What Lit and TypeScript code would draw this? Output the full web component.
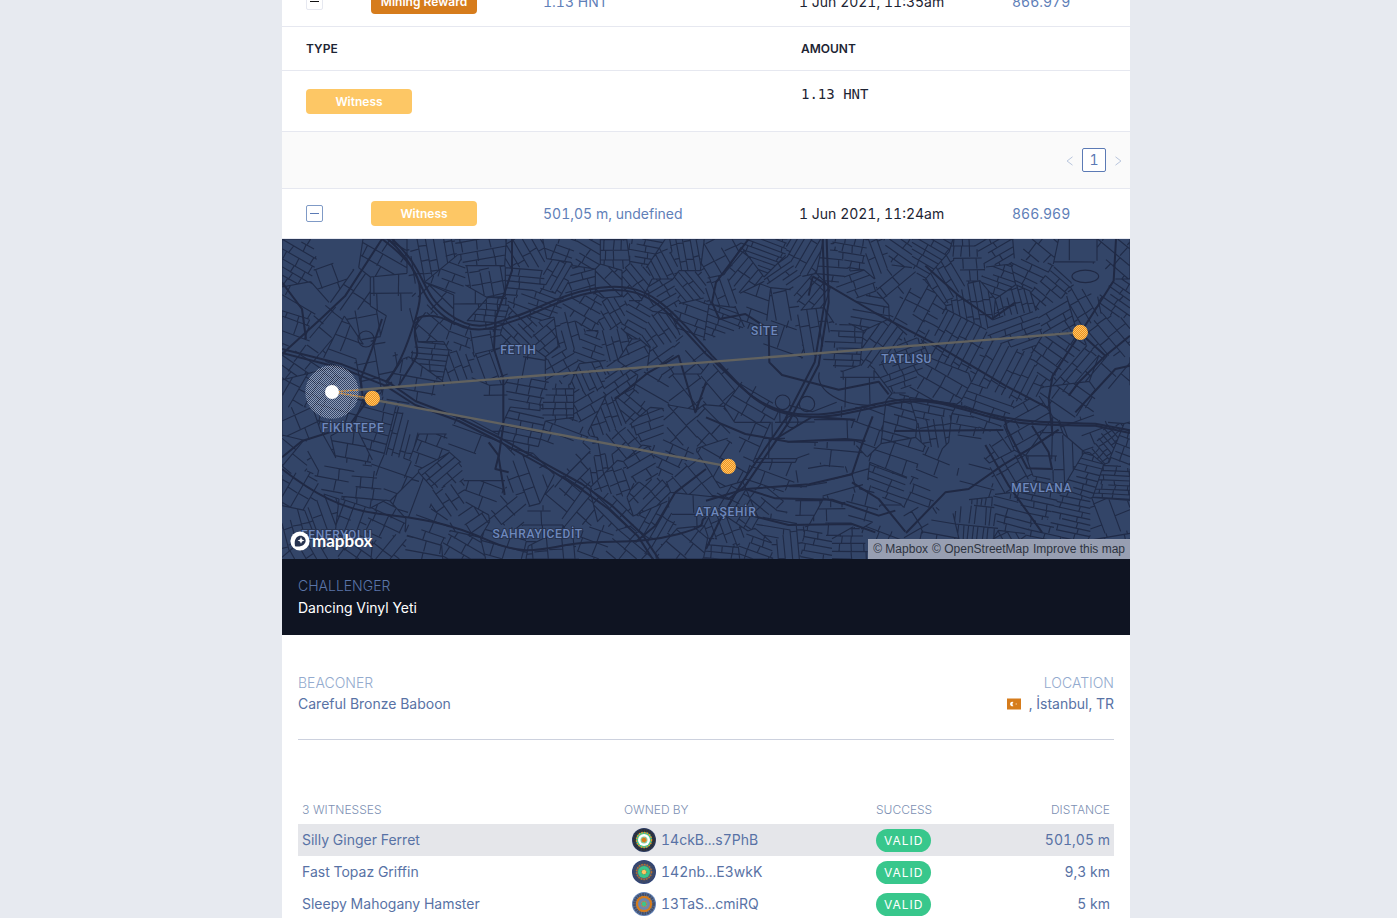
import { LitElement, html, css, svg } from "lit";
import { customElement } from "lit/decorators.js";

type Pt = [number, number];

/* Street blocks: centre x, centre y, direction in degrees, row gap, cross gap (0 = open land). */
const BLOCKS: number[][] = [
  [40, 80, 30, 24, 40], [170, 40, 0, 0, 0], [60, 190, 30, 70, 90], [150, 110, -20, 60, 50], [220, 160, -55, 42, 80],
  [130, 270, -50, 50, 60], [35, 270, 20, 40, 40], [190, 300, 20, 42, 60], [40, 370, 35, 30, 40], [300, 60, 30, 40, 60],
  [310, 160, 0, 80, 70], [250, 260, 80, 60, 70], [350, 290, 0, 0, 0], [290, 350, 80, 60, 50], [60, 450, -60, 36, 40],
  [450, 60, 80, 26, 40], [500, 120, 20, 24, 50], [600, 40, -10, 30, 45], [600, 120, 80, 32, 42], [560, 190, 0, 80, 90],
  [470, 190, 45, 50, 60], [740, 50, 60, 24, 60], [740, 120, 5, 20, 70], [760, 190, 20, 18, 60], [830, 100, -60, 20, 46],
  [840, 30, 20, 26, 44], [910, 50, 30, 24, 60], [900, 120, -15, 22, 50], [1000, 50, 0, 30, 26], [980, 120, 45, 34, 60],
  [1080, 40, 10, 20, 50], [1060, 120, 50, 20, 50], [1140, 80, 62, 18, 70], [1140, 160, -30, 20, 50], [1220, 50, 80, 20, 50],
  [1220, 140, 50, 18, 60], [1240, 230, 20, 26, 50], [610, 235, 5, 20, 30], [450, 265, 40, 50, 50], [540, 300, 20, 26, 50],
  [450, 350, 5, 17, 60], [400, 420, 10, 40, 50], [540, 370, 70, 22, 50], [590, 300, 80, 60, 60], [610, 380, 70, 40, 70],
  [720, 270, 45, 19, 60], [790, 300, -40, 24, 44], [740, 370, 10, 70, 80], [860, 290, 75, 22, 50], [920, 220, 30, 30, 40],
  [840, 370, -30, 24, 50], [920, 330, 20, 20, 50], [990, 230, 60, 20, 46], [1000, 310, 75, 22, 60], [1060, 250, 30, 19, 55],
  [1120, 280, 55, 20, 50], [1060, 350, -25, 26, 46], [1140, 360, -35, 28, 60], [930, 410, 65, 20, 56], [1010, 420, -35, 24, 44],
  [1210, 360, 50, 70, 90], [1210, 450, 52, 56, 60], [1110, 450, 30, 50, 60], [570, 470, 0, 0, 0], [620, 500, 0, 100, 120],
  [740, 470, 10, 24, 40], [730, 550, 12, 22, 44], [830, 500, 0, 22, 38], [840, 580, 20, 30, 42], [920, 500, -30, 28, 50],
  [850, 640, 0, 0, 0], [980, 530, 70, 22, 50], [1050, 500, 40, 26, 44], [1100, 560, -20, 26, 50], [1190, 560, 48, 50, 66],
  [1020, 610, 50, 26, 42], [950, 670, 80, 18, 44], [1000, 720, 70, 26, 36], [1080, 680, -30, 28, 40], [1160, 660, 25, 28, 46],
  [900, 670, -45, 34, 40], [1100, 770, -45, 22, 50], [1220, 720, 50, 50, 70], [1130, 840, -60, 20, 36], [1210, 810, 0, 80, 90],
  [1220, 920, 40, 44, 60], [60, 560, -25, 44, 60], [150, 530, 15, 50, 70], [200, 620, 10, 44, 60], [280, 580, 15, 30, 60],
  [360, 600, 105, 19, 56], [440, 630, 20, 34, 54], [440, 540, 0, 0, 0], [560, 610, 20, 60, 90], [480, 700, -40, 22, 50],
  [600, 680, 0, 0, 0], [40, 640, -50, 60, 60], [110, 640, 60, 60, 80], [160, 710, 10, 34, 60], [240, 750, 5, 36, 46],
  [340, 710, 20, 54, 90], [400, 770, -70, 50, 90], [60, 760, -60, 34, 60], [120, 830, 70, 28, 60], [210, 840, -70, 36, 60],
  [300, 860, 25, 36, 50], [40, 860, 75, 26, 60], [100, 930, 60, 30, 50], [220, 920, 35, 30, 44], [320, 930, -50, 34, 46],
  [440, 870, 20, 36, 60], [500, 780, 55, 28, 50], [600, 770, 20, 44, 60], [560, 840, -35, 34, 46], [420, 940, 10, 36, 60],
  [540, 930, 30, 30, 50], [660, 900, 15, 36, 44], [680, 820, -40, 40, 50], [750, 740, 70, 36, 50], [780, 850, 0, 44, 60],
  [830, 780, 40, 40, 50], [900, 830, -50, 40, 60], [820, 930, 85, 40, 60], [940, 900, 20, 40, 50], [1020, 940, 40, 36, 60],
  [980, 810, 45, 30, 40],
  [1300, 60, 60, 36, 60], [1320, 160, 70, 24, 50], [1380, 110, -50, 22, 60], [1460, 50, 20, 14, 90], [1510, 100, -35, 18, 60],
  [1420, 190, 20, 40, 60], [1500, 200, 80, 40, 50], [1560, 60, -60, 20, 60], [1580, 160, -50, 22, 70], [1310, 240, 20, 18, 60],
  [1340, 330, 0, 0, 0], [1420, 370, 0, 0, 0], [1500, 290, 20, 70, 80], [1590, 260, 80, 28, 60], [1660, 80, 5, 22, 60],
  [1710, 50, 10, 22, 30], [1720, 140, -20, 24, 60], [1690, 195, 0, 0, 0], [1690, 310, 2, 17, 54], [1740, 210, 10, 22, 50],
  [1790, 60, 70, 20, 60], [1840, 120, -40, 34, 60], [1850, 40, 35, 22, 60], [1930, 40, 30, 18, 60],
  [1900, 200, -62, 42, 30], [2020, 300, -62, 24, 62], [2170, 390, -62, 24, 62],
  [2060, 80, 0, 32, 22], [2080, 180, 80, 18, 60], [2010, 110, 60, 22, 50], [2140, 40, -30, 20, 60],
  [2150, 120, 20, 20, 60], [2200, 190, 75, 20, 50], [2240, 100, 25, 24, 60], [2250, 30, 40, 40, 60], [2300, 160, 40, 22, 40],
  [2330, 220, -30, 24, 50], [2210, 260, -20, 20, 50], [2390, 60, 0, 80, 70], [2440, 120, 0, 0, 0], [2400, 200, 60, 26, 44],
  [2500, 60, 40, 34, 60], [2500, 180, 35, 20, 50], [2480, 280, 50, 34, 50], [1790, 320, -55, 24, 60], [1850, 375, -20, 18, 40],
  [1960, 450, 30, 40, 50], [2340, 340, 35, 26, 50], [2390, 390, -50, 22, 60],
  [2470, 420, -50, 60, 90], [2400, 470, 35, 40, 90], [2480, 480, 0, 0, 0], [1480, 410, 0, 0, 0], [1600, 440, 0, 0, 0],
  [1740, 460, 0, 90, 90], [1310, 440, 50, 46, 70], [1390, 500, 30, 40, 60], [1300, 560, 45, 40, 60], [1390, 600, 25, 54, 60],
  [1330, 650, 30, 60, 80], [1650, 570, 0, 60, 145], [1560, 590, 0, 60, 90], [1480, 640, 0, 60, 110], [1640, 650, 5, 52, 120],
  [1600, 700, -10, 50, 90], [1480, 700, 20, 56, 70], [1760, 540, 20, 50, 70], [1850, 550, 15, 24, 60], [1950, 520, 12, 22, 56],
  [1960, 560, 80, 24, 40], [2050, 570, 10, 26, 44], [2110, 530, 20, 24, 50], [1870, 655, 18, 46, 48],
  [1950, 690, 22, 46, 50], [1830, 755, 20, 20, 56], [1900, 770, 20, 24, 56], [2050, 650, 0, 0, 0], [2070, 700, 15, 50, 100],
  [2150, 620, 55, 40, 60], [2220, 590, -30, 32, 60], [2180, 680, 60, 40, 60], [2290, 640, 0, 80, 90], [2360, 660, 88, 30, 90],
  [2420, 590, -20, 40, 60], [2470, 620, 50, 16, 18], [2410, 690, 15, 18, 50], [2520, 640, 20, 24, 30], [2500, 720, 3, 14, 40],
  [2090, 860, 6, 54, 15], [1960, 890, 10, 44, 50], [2200, 840, 15, 24, 70],
  [2260, 790, 12, 20, 46], [2360, 840, 12, 18, 54], [2490, 840, 70, 50, 60],
  [2500, 920, -10, 16, 70], [2280, 900, 12, 20, 50], [2190, 920, 60, 24, 40], [1990, 740, 0, 0, 0], [1900, 840, -30, 60, 60],
  [1740, 800, 15, 44, 50], [1650, 840, 0, 38, 46], [1560, 790, 0, 44, 60], [1450, 790, 40, 30, 40], [1380, 820, -60, 24, 36],
  [1480, 860, 10, 26, 44], [1340, 880, 70, 26, 40], [1320, 940, 5, 20, 34], [1420, 930, 20, 20, 36], [1520, 920, 85, 22, 40],
  [1600, 930, 10, 22, 34], [1700, 930, 0, 24, 36], [1680, 740, -15, 40, 90], [1800, 900, 20, 36, 44], [1830, 840, 0, 0, 0],
];

const MAJOR: string[] = [
  "M300 0C420 90 430 140 400 240S340 400 310 430M318 0C430 100 400 170 490 235S640 262 700 244 860 162 980 154 1140 200 1272 345",
  "M330 0C440 100 410 160 500 225S640 248 700 232 860 150 980 144 1150 190 1290 350",
  "M1272 345C1360 420 1400 490 1510 518S1740 500 1830 486 2000 492 2110 522 2300 550 2440 554L2544 574",
  "M1290 350C1370 430 1410 500 1520 526S1740 508 1840 492 2000 498 2110 530 2300 556 2440 560L2544 582",
  "M0 330L180 376 320 430 400 486 530 536 660 600 800 680 900 735 990 800 1080 885 1130 960",
  "M0 342L180 388 310 440 400 498 530 546 660 612 800 690 890 745 980 810 1068 892 1112 960",
  "M690 0L690 95 668 160 640 240 636 330 664 420 664 560 650 655 668 768",
  "M0 655L60 606 200 562 245 500 236 420 270 330 300 240M245 500L280 460 330 430",
  "M0 690C90 760 180 812 290 824S500 850 620 905 800 920 900 912 1080 915 1190 885 1240 850 1272 835",
  "M300 0L190 170 120 236 0 345M0 130L60 210 72 300",
  "M1622 0L1628 190 1598 370 1510 540 1380 730 1310 850 1272 930",
  "M1634 0L1640 190 1610 378 1520 550 1390 740 1340 780 1290 770",
  "M1592 112L1780 222 1950 310 2170 440 2300 508M1592 112L1580 170",
  "M1930 80L2030 170 2130 240 2200 190",
  "M2502 0L2495 125 2390 290 2312 410 2300 480 2312 590",
  "M2395 283L2470 350 2390 430 2360 470M2470 350L2544 290M2544 380L2500 390 2380 520",
  "M1872 882L1990 760 2060 750 2160 680 2250 625 2330 572",
  "M1772 532L1742 610 1710 706 1582 736 1390 750 1272 785",
  "M1272 535L1390 585 1520 608 1690 600 1750 606M1480 600L1590 534 1720 542",
  "M2168 536L2175 570 2236 688 2310 690 2300 640 2250 560",
  "M2110 618L2180 740 2280 880M1836 576L2164 573",
  "M1710 730L1790 780 1870 878M1390 750L1480 778 1650 782 1790 830 1840 815M1370 820L1520 858 1710 855 1780 880",
  "M1400 0L1302 130 1290 190 1312 240 1390 225 1460 270 1462 370 1500 408 1670 452 1790 428 1820 466",
  "M1272 430L1240 520 1190 350 1100 400 1000 480M1272 690L1180 760 1120 860 1060 910",
  "M400 240C440 220 480 232 520 256M410 240C380 290 420 330 400 360L350 440M620 610L650 650 640 690 680 700",
];

const RAMPS: string[] = [
  "M1612 400C1600 440 1650 500 1780 500M1480 490A22 22 0 1 0 1524 490A22 22 0 1 0 1480 490M1552 495A23 23 0 1 0 1598 495A23 23 0 1 0 1552 495M1512 548A18 18 0 1 0 1548 548A18 18 0 1 0 1512 548",
  "M228 300A24 24 0 1 0 276 300A24 24 0 1 0 228 300",
  "M2370 112A34 16 0 1 0 2450 112A34 16 0 1 0 2370 112",
];

const W = 2544;
const H = 960;

function makeStreets(): string {
  let seed = 7;
  const rnd = () => {
    seed = (seed * 1664525 + 1013904223) % 4294967296;
    return seed / 4294967296;
  };
  const out: string[] = [];
  const f = (n: number) => Math.round(n);

  for (const [cx, cy, deg, rowGap, crossGap] of BLOCKS) {
    let cell: Pt[] = [[0, 0], [W, 0], [W, H], [0, H]];
    for (const [ox, oy] of BLOCKS) {
      if ((ox === cx && oy === cy) || Math.hypot(ox - cx, oy - cy) > 420) continue;
      const nx = ox - cx;
      const ny = oy - cy;
      const d = nx * (cx + ox) / 2 + ny * (cy + oy) / 2;
      const next: Pt[] = [];
      cell.forEach((p, i) => {
        const q = cell[(i + 1) % cell.length];
        const a = p[0] * nx + p[1] * ny - d;
        const b = q[0] * nx + q[1] * ny - d;
        if (a <= 0) next.push(p);
        if (a * b < 0) {
          const t = a / (a - b);
          next.push([p[0] + (q[0] - p[0]) * t, p[1] + (q[1] - p[1]) * t]);
        }
      });
      cell = next;
    }
    if (!rowGap || cell.length < 3) continue;
    const segment = (x1: number, y1: number, x2: number, y2: number) => {
      let t0 = 0;
      let t1 = 1;
      for (let i = 0; i < cell.length; i++) {
        const p = cell[i];
        const q = cell[(i + 1) % cell.length];
        const ex = q[1] - p[1];
        const ey = p[0] - q[0];
        const a = (x1 - p[0]) * ex + (y1 - p[1]) * ey;
        const b = (x2 - p[0]) * ex + (y2 - p[1]) * ey;
        if (a > 0 && b > 0) return;
        if (a > 0) t0 = Math.max(t0, a / (a - b));
        else if (b > 0) t1 = Math.min(t1, a / (a - b));
      }
      if (t0 >= t1) return;
      const dx = x2 - x1;
      const dy = y2 - y1;
      out.push(`M${f(x1 + dx * t0)} ${f(y1 + dy * t0)}L${f(x1 + dx * t1)} ${f(y1 + dy * t1)}`);
    };
    cell.forEach((p, i) => {
      const q = cell[(i + 1) % cell.length];
      if (rnd() < 0.3) out.push(`M${f(p[0])} ${f(p[1])}L${f(q[0])} ${f(q[1])}`);
    });
    const rad = (deg * Math.PI) / 180;
    const at = (u: number, v: number): Pt => [
      cx + u * Math.cos(rad) - v * Math.sin(rad),
      cy + u * Math.sin(rad) + v * Math.cos(rad),
    ];
    for (let v = -220; v < 220; v += rowGap * (0.85 + rnd() * 0.3)) {
      const lean = (rnd() - 0.5) * 5;
      const from = rnd() < 0.15 ? -20 : -240;
      segment(...at(from, v - lean), ...at(240, v + lean));
      for (let u = -240; u < 240; u += crossGap) {
        const shift = (rnd() - 0.5) * crossGap * 0.3;
        if (rnd() < 0.8) segment(...at(u + shift, v), ...at(u + shift + (rnd() - 0.5) * 6, v + rowGap));
      }
    }
  }
  return out.join("");
}

const STREETS = makeStreets();

const LABELS: [string, number, number][] = [
  ["FETIH", 709, 345], ["SİTE", 1448, 287], ["TATLISU", 1874, 373], ["FİKİRTEPE", 213, 578], ["MEVLANA", 2279, 760],
  ["ATAŞEHİR", 1332, 831], ["SAHRAYICEDİT", 767, 897], ["FENERYOLU", 164, 900],
];

const WITNESSES = [
  { name: "Silly Ginger Ferret", owner: "14ckB...s7PhB", distance: "501,05 m", rings: ["#2b3a60", "#2d3036", "#f0932b", "#38c78c", "#ffffff", "#7fd0a8", "#d67c1c"] },
  { name: "Fast Topaz Griffin", owner: "142nb...E3wkK", distance: "9,3 km", rings: ["#2f4478", "#3f4a66", "#b8702c", "#5c6470", "#38c78c", "#38c78c", "#fdc765"] },
  { name: "Sleepy Mahogany Hamster", owner: "13TaS...cmiRQ", distance: "5 km", rings: ["#5f7fb4", "#44506a", "#d67c1c", "#d67c1c", "#6d86b0", "#8c8f86", "#38c78c"] },
];

@customElement("app-root")
export class AppRoot extends LitElement {
  static styles = css`
    :host {
      display: block;
      height: 100vh;
      overflow: hidden;
      box-sizing: border-box;
      padding-left: 15px;
      background: #e7eaf0;
      color: #1d2433;
      font: 14px/22px Inter, "Noto Sans", sans-serif;
      font-variant-numeric: tabular-nums;
    }
    a { color: #5f80b8; text-decoration: none; }
    button { font: inherit; padding: 0; cursor: pointer; }
    .sheet { max-width: 848px; margin: -23px auto 0; background: #fff; }
    table { width: 100%; border-collapse: separate; border-spacing: 0; table-layout: fixed; }
    td, th { padding: 0; text-align: left; font-weight: 400; }
    .c-toggle { width: 73px; }
    .c-type { width: 172px; }
    .c-date { width: 213px; }
    .c-block { width: 134px; }
    .c-amount { width: 353px; }
    .activity > td { height: 49px; padding: 0 16px; border-bottom: 1px solid #e6e8f0; white-space: nowrap; }
    .activity > td:first-child { padding: 0 0 0 24px; }
    .toggle { display: block; width: 17px; height: 17px; background: #fff; border: 1px solid #e6e8f0; border-radius: 2px; color: #111; }
    .toggle.on { border: 1px solid #7f9ac6; color: #5b7ab5; }
    .toggle svg { display: block; width: 15px; height: 15px; }
    .tag { display: block; width: 106px; height: 25px; border-radius: 4px; color: #fff; background: #fdc765; font-size: 12px; font-weight: 600; line-height: 25px; text-align: center; }
    .tag.mining { background: #d67c1c; }
    .rewards th { height: 43px; padding: 0 24px; border-bottom: 1px solid #e6e8f0; font-size: 12px; font-weight: 600; }
    .rewards td { height: 60px; padding: 0 24px; border-bottom: 1px solid #e6e8f0; }
    .rewards .mono { padding-top: 12px; vertical-align: top; height: 48px; font-family: "DejaVu Sans Mono", monospace; }
    .pager { display: flex; align-items: center; justify-content: flex-end; height: 56px; background: #fafafa; border-bottom: 1px solid #e6e8f0; }
    .pager .step { width: 24px; height: 24px; border: 0; background: none; color: #a9b9d6; }
    .pager .step svg { display: block; margin: 8px auto 6px; width: 10px; height: 10px; }
    .pager .page { width: 24px; height: 24px; border: 1px solid #5b7ab5; border-radius: 2px; background: #fff; color: #5b7ab5; }
    .map { position: relative; height: 320px; background: #334568; overflow: hidden; }
    .map > svg { display: block; width: 100%; height: 100%; }
    .place { font: 500 36px Roboto, sans-serif; letter-spacing: 2px; fill: #6d88bd; stroke: #27334f; stroke-width: 6px; paint-order: stroke; text-anchor: middle; }
    .brand { position: absolute; left: 8px; bottom: 8px; display: flex; align-items: center; gap: 2px; color: #fff; font: 700 17px/20px Lato, sans-serif; }
    .brand svg { display: block; width: 20px; height: 20px; }
    .credits { position: absolute; right: 0; bottom: 0; display: flex; gap: 4px; padding: 0 5px; background: #989fb2; font: 12px/20px "Liberation Sans", Arial, sans-serif; }
    .credits a { color: #2d3340; }
    .challenger { padding: 16px; background: #0f1422; color: #fff; }
    .challenger p, .beacon p { margin: 0; }
    .challenger .label { color: #5b75a8; font-weight: 300; }
    .beacon { display: flex; justify-content: space-between; margin: 0 16px; padding: 37px 0 25px; border-bottom: 1px solid #ccd1de; line-height: 21px; color: #5872a5; }
    .beacon .label { color: #93aace; font-weight: 300; }
    .beacon div:last-child { text-align: right; }
    .beacon a { color: inherit; }
    .flag { width: 14px; height: 12px; margin-right: 4px; vertical-align: -1px; }
    .witness-wrap { padding: 55px 16px 24px; }
    .witnesses th { height: 29px; padding: 0 4px; font-size: 12px; font-weight: 300; color: #7d90b3; }
    .witnesses td { height: 32px; padding: 0 4px; color: #5872a5; white-space: nowrap; }
    .witnesses a { color: inherit; }
    .witnesses tr.active td { background: #e5e6ea; }
    .witnesses .num { text-align: right; }
    .w-owner { width: 252px; }
    .w-ok { width: 92px; }
    .w-dist { width: 150px; }
    .owner { display: flex; align-items: center; gap: 5px; padding-left: 8px; }
    .owner svg { width: 24px; height: 24px; }
    .valid { display: inline-block; padding: 0 8px; border-radius: 12px; background: #38c78c; color: #fff; font-size: 12px; line-height: 23px; letter-spacing: 1px; vertical-align: middle; }
  `;

  private activity(type: string, mining: boolean, detail: string, date: string, block: string) {
    return html`<tr class="activity">
      <td>
        <button class="toggle ${mining ? "" : "on"}" aria-label="Collapse row">
          <svg viewBox="0 0 15 15"><path d="M3 7.5H12" stroke="currentColor" /></svg>
        </button>
      </td>
      <td><span class="tag ${mining ? "mining" : ""}">${type}</span></td>
      <td><a href="#detail">${detail}</a></td>
      <td>${date}</td>
      <td><a href="#block">${block}</a></td>
    </tr>`;
  }

  private pin(x: number, y: number) {
    return svg`<circle cx=${x} cy=${y} r="23" fill="url(#amber)" />`;
  }

  private map() {
    return html`<div class="map">
      <svg viewBox="0 0 2544 960" preserveAspectRatio="xMidYMid slice" role="img" aria-label="Map of witnesses">
        <defs>
          <pattern id="amber" width="6" height="6" patternUnits="userSpaceOnUse">
            <rect width="6" height="6" fill="#fdc765" />
            <path d="M0 0h3v3h3v3h-3v-3h-3z" fill="#f09020" />
          </pattern>
          <pattern id="haze" width="6" height="6" patternUnits="userSpaceOnUse">
            <path d="M0 0h3v3h3v3h-3v-3h-3z" fill="#a3afc8" />
          </pattern>
        </defs>
        <rect width="2544" height="960" fill="#334568" />
        <path d=${STREETS} fill="none" stroke="#202b47" stroke-width="3.4" />
        <g fill="none" stroke="#202944" stroke-width="3.4">
          ${RAMPS.map((d) => svg`<path d=${d} />`)}
        </g>
        <g fill="none" stroke="#202944" stroke-width="6" stroke-linejoin="round">
          ${MAJOR.map((d) => svg`<path d=${d} />`)}
        </g>
        <g stroke="#62625f" stroke-width="7">
          <path d="M150 459L2395 280" /><path d="M150 459L1339 682" />
        </g>
        ${LABELS.map(([t, x, y]) => svg`<text class="place" x=${x} y=${y}>${t}</text>`)}
        <circle cx="150" cy="459" r="80" fill="url(#haze)" opacity=".8" />
        <path d="M150 459L271 478M150 459L230 453" stroke="#e88f2c" stroke-width="3" stroke-dasharray="6 3" />
        <circle cx="150" cy="459" r="21" fill="#fff" />
        ${this.pin(271, 478)} ${this.pin(1339, 682)} ${this.pin(2395, 280)}
      </svg>
      <div class="brand">
        <svg viewBox="0 0 20 20">
          <circle cx="10" cy="10" r="9.6" fill="#fff" />
          <path d="M5 15.200C4.300 11 4.800 8.600 6.500 6.500 8.700 3.900 12.400 4.200 14.300 6.200c2 2.100 1.900 5.200-.4 7.200C11.600 15.300 8.700 15.800 5 15.200z" fill="#27334f" />
          <path d="M11 6l1 2.400 2.400 1-2.400 1-1 2.400-1-2.400-2.400-1 2.400-1z" fill="#fff" />
        </svg>
        <span>mapbox</span>
      </div>
      <div class="credits">
        <a href="#mapbox">© Mapbox</a><a href="#osm">© OpenStreetMap</a><a href="#improve">Improve this map</a>
      </div>
    </div>`;
  }

  private avatar(c: string[]) {
    return html`<svg viewBox="0 0 24 24" aria-hidden="true">
      <circle cx="12" cy="12" r="12" fill=${c[0]} />
      <circle cx="12" cy="12" r="9.5" fill="none" stroke=${c[1]} stroke-width="3" stroke-dasharray="2 .5" />
      <circle cx="12" cy="12" r="8" fill=${c[3]} />
      <circle cx="12" cy="12" r="7.500" fill="none" stroke=${c[2]} stroke-width="1.500" stroke-dasharray="1.500 1.200" />
      <circle cx="12" cy="12" r="6" fill=${c[4]} />
      <circle cx="12" cy="12" r="3.500" fill=${c[5]} />
      <circle cx="12" cy="12" r="2.300" fill=${c[6]} />
      <circle cx="12" cy="12" r="2.500" fill="none" stroke=${c[2]} stroke-width="1" stroke-dasharray="1 1.500" />
    </svg>`;
  }

  render() {
    return html`<main class="sheet">
      <table>
        <colgroup><col class="c-toggle" /><col class="c-type" /><col /><col class="c-date" /><col class="c-block" /></colgroup>
        <tbody>
          ${this.activity("Mining Reward", true, "1.13 HNT", "1 Jun 2021, 11:35am", "866.979")}
          <tr>
            <td colspan="5">
              <table class="rewards">
                <colgroup><col /><col class="c-amount" /></colgroup>
                <thead><tr><th>TYPE</th><th>AMOUNT</th></tr></thead>
                <tbody><tr><td><span class="tag">Witness</span></td><td class="mono">1.13 HNT</td></tr></tbody>
              </table>
              <nav class="pager" aria-label="Pages">
                <button class="step" aria-label="Previous"><svg viewBox="0 0 12 12" fill="none" stroke="currentColor"><path d="M9 1L2.500 6 9 11" /></svg></button>
                <button class="page">1</button>
                <button class="step" aria-label="Next"><svg viewBox="0 0 12 12" fill="none" stroke="currentColor"><path d="M3 1L9.500 6 3 11" /></svg></button>
              </nav>
            </td>
          </tr>
          ${this.activity("Witness", false, "501,05 m, undefined", "1 Jun 2021, 11:24am", "866.969")}
        </tbody>
      </table>
      ${this.map()}
      <section class="challenger">
        <p class="label">CHALLENGER</p>
        <p>Dancing Vinyl Yeti</p>
      </section>
      <section class="beacon">
        <div><p class="label">BEACONER</p><p><a href="#beaconer">Careful Bronze Baboon</a></p></div>
        <div>
          <p class="label">LOCATION</p>
          <p>
            <svg class="flag" viewBox="0 0 14 12"><rect y=".5" width="14" height="11" fill="#d67c1c" /><path d="M6.500 4a2.300 2.300 0 1 0 0 4 2.500 2.500 0 0 1 0-4z" fill="#fff" /><circle cx="9.200" cy="6" r=".7" fill="#f3cfa6" /></svg>
            , İstanbul, TR
          </p>
        </div>
      </section>
      <section class="witness-wrap">
        <table class="witnesses">
          <colgroup><col /><col class="w-owner" /><col class="w-ok" /><col class="w-dist" /></colgroup>
          <thead><tr><th>3 WITNESSES</th><th>OWNED BY</th><th>SUCCESS</th><th class="num">DISTANCE</th></tr></thead>
          <tbody>
            ${WITNESSES.map((w, i) => html`<tr class=${i === 0 ? "active" : ""}>
              <td><a href="#witness">${w.name}</a></td>
              <td><a class="owner" href="#owner">${this.avatar(w.rings)}<span>${w.owner}</span></a></td>
              <td><span class="valid">VALID</span></td>
              <td class="num">${w.distance}</td>
            </tr>`)}
          </tbody>
        </table>
      </section>
    </main>`;
  }
}
